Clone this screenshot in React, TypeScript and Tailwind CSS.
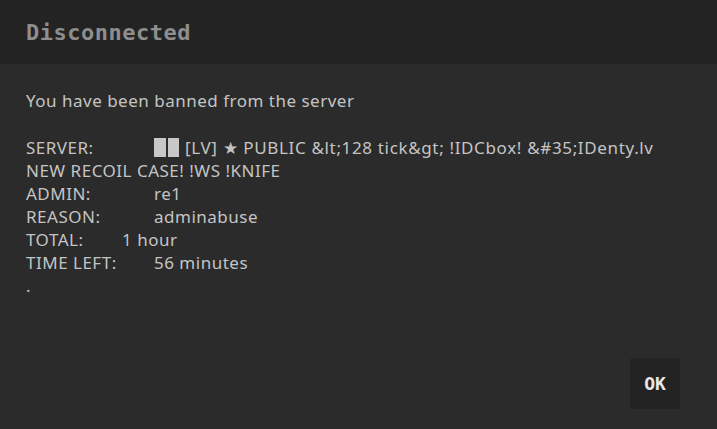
import React from "react";

export default function App() {
  const body = { fontFamily: '"Noto Sans", "Open Sans", sans-serif' };
  const title = { fontFamily: '"DejaVu Sans Mono", monospace' };
  return (
    <div className="w-[717px] h-[429px] bg-[#2b2b2b] flex flex-col overflow-hidden">
      <div className="h-[64px] bg-[#232323] flex items-center pl-[26px]">
        <span style={title} className="text-[22px] font-bold text-[#8e8e8e] tracking-[0.5px]">
          Disconnected
        </span>
      </div>
      <div style={body} className="flex-1 flex flex-col px-[26px] pt-[25px] text-[17px] leading-[23px] text-[#c4c4c4] tracking-[0.5px]">
        <div>You have been banned from the server</div>
        <div className="h-[24px]" />
        <div className="flex items-center whitespace-nowrap">
          <span className="w-[128px]">SERVER:</span>
          <span className="inline-flex gap-[2px] mr-[6px]">
            <span className="inline-block w-[12px] h-[19px] bg-[#c8c8c8]" />
            <span className="inline-block w-[11px] h-[19px] bg-[#c8c8c8]" />
          </span>
          <span className="tracking-[0.65px]">[LV] ★ PUBLIC &amp;lt;128 tick&amp;gt; !IDCbox! &amp;#35;IDenty.lv</span>
        </div>
        <div>NEW RECOIL CASE! !WS !KNIFE</div>
        <div className="flex">
          <span className="w-[128px]">ADMIN:</span>
          <span>re1</span>
        </div>
        <div className="flex">
          <span className="w-[128px]">REASON:</span>
          <span>adminabuse</span>
        </div>
        <div className="flex">
          <span className="w-[96px]">TOTAL:</span>
          <span>1 hour</span>
        </div>
        <div className="flex">
          <span className="w-[128px]">TIME LEFT:</span>
          <span>56 minutes</span>
        </div>
        <div>.</div>
        <div className="flex-1" />
        <div className="flex justify-end pr-[11px] pb-[20px]">
          <div className="w-[50px] h-[51px] bg-[#232323] rounded-[3px] flex items-center justify-center">
            <span style={title} className="text-[18px] font-bold text-[#e8e8e8] tracking-normal">OK</span>
          </div>
        </div>
      </div>
    </div>
  );
}
